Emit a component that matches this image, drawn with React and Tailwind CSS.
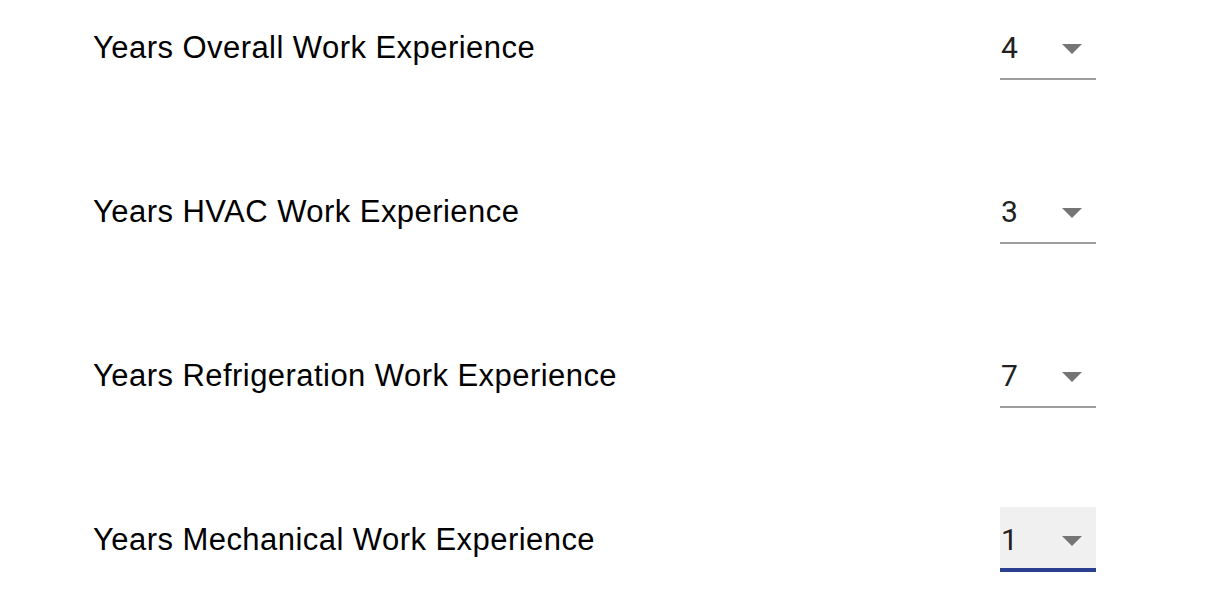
import React from "react";

const rows = [
  { label: "Years Overall Work Experience", value: "4" },
  { label: "Years HVAC Work Experience", value: "3" },
  { label: "Years Refrigeration Work Experience", value: "7" },
  { label: "Years Mechanical Work Experience", value: "1", focused: true },
];

function Select({ value, focused }) {
  return (
    <div
      className={
        "relative flex h-[65px] w-[96px] items-center " +
        (focused ? "bg-[#f0f0f0]" : "")
      }
    >
      <span className="pl-[1px] text-[30px] leading-none text-[#212121] [font-family:Roboto,'Liberation_Sans',sans-serif]">
        {value}
      </span>
      <svg
        className="absolute right-[14px] top-[29px]"
        width="20"
        height="10"
        viewBox="0 0 20 10"
      >
        <path d="M0 0 L20 0 L10 10 Z" fill="#757575" />
      </svg>
      {focused ? (
        <div className="absolute bottom-0 left-0 right-0 h-[4px] bg-[#2b3e90]" />
      ) : (
        <div className="absolute bottom-[0px] left-0 right-0 h-[2px] bg-[#9e9e9e]" />
      )}
    </div>
  );
}

export default function App() {
  return (
    <div className="min-h-[612px] w-[1210px] bg-white pt-[15px]">
      <div className="flex flex-col gap-[99px] pl-[93px] pr-[114px]">
        {rows.map((r) => (
          <div key={r.label} className="flex h-[65px] items-center justify-between">
            <span className="text-[31px] leading-none tracking-[0.45px] text-black [font-family:'Liberation_Sans',Arial,sans-serif]">
              {r.label}
            </span>
            <Select value={r.value} focused={r.focused} />
          </div>
        ))}
      </div>
    </div>
  );
}
